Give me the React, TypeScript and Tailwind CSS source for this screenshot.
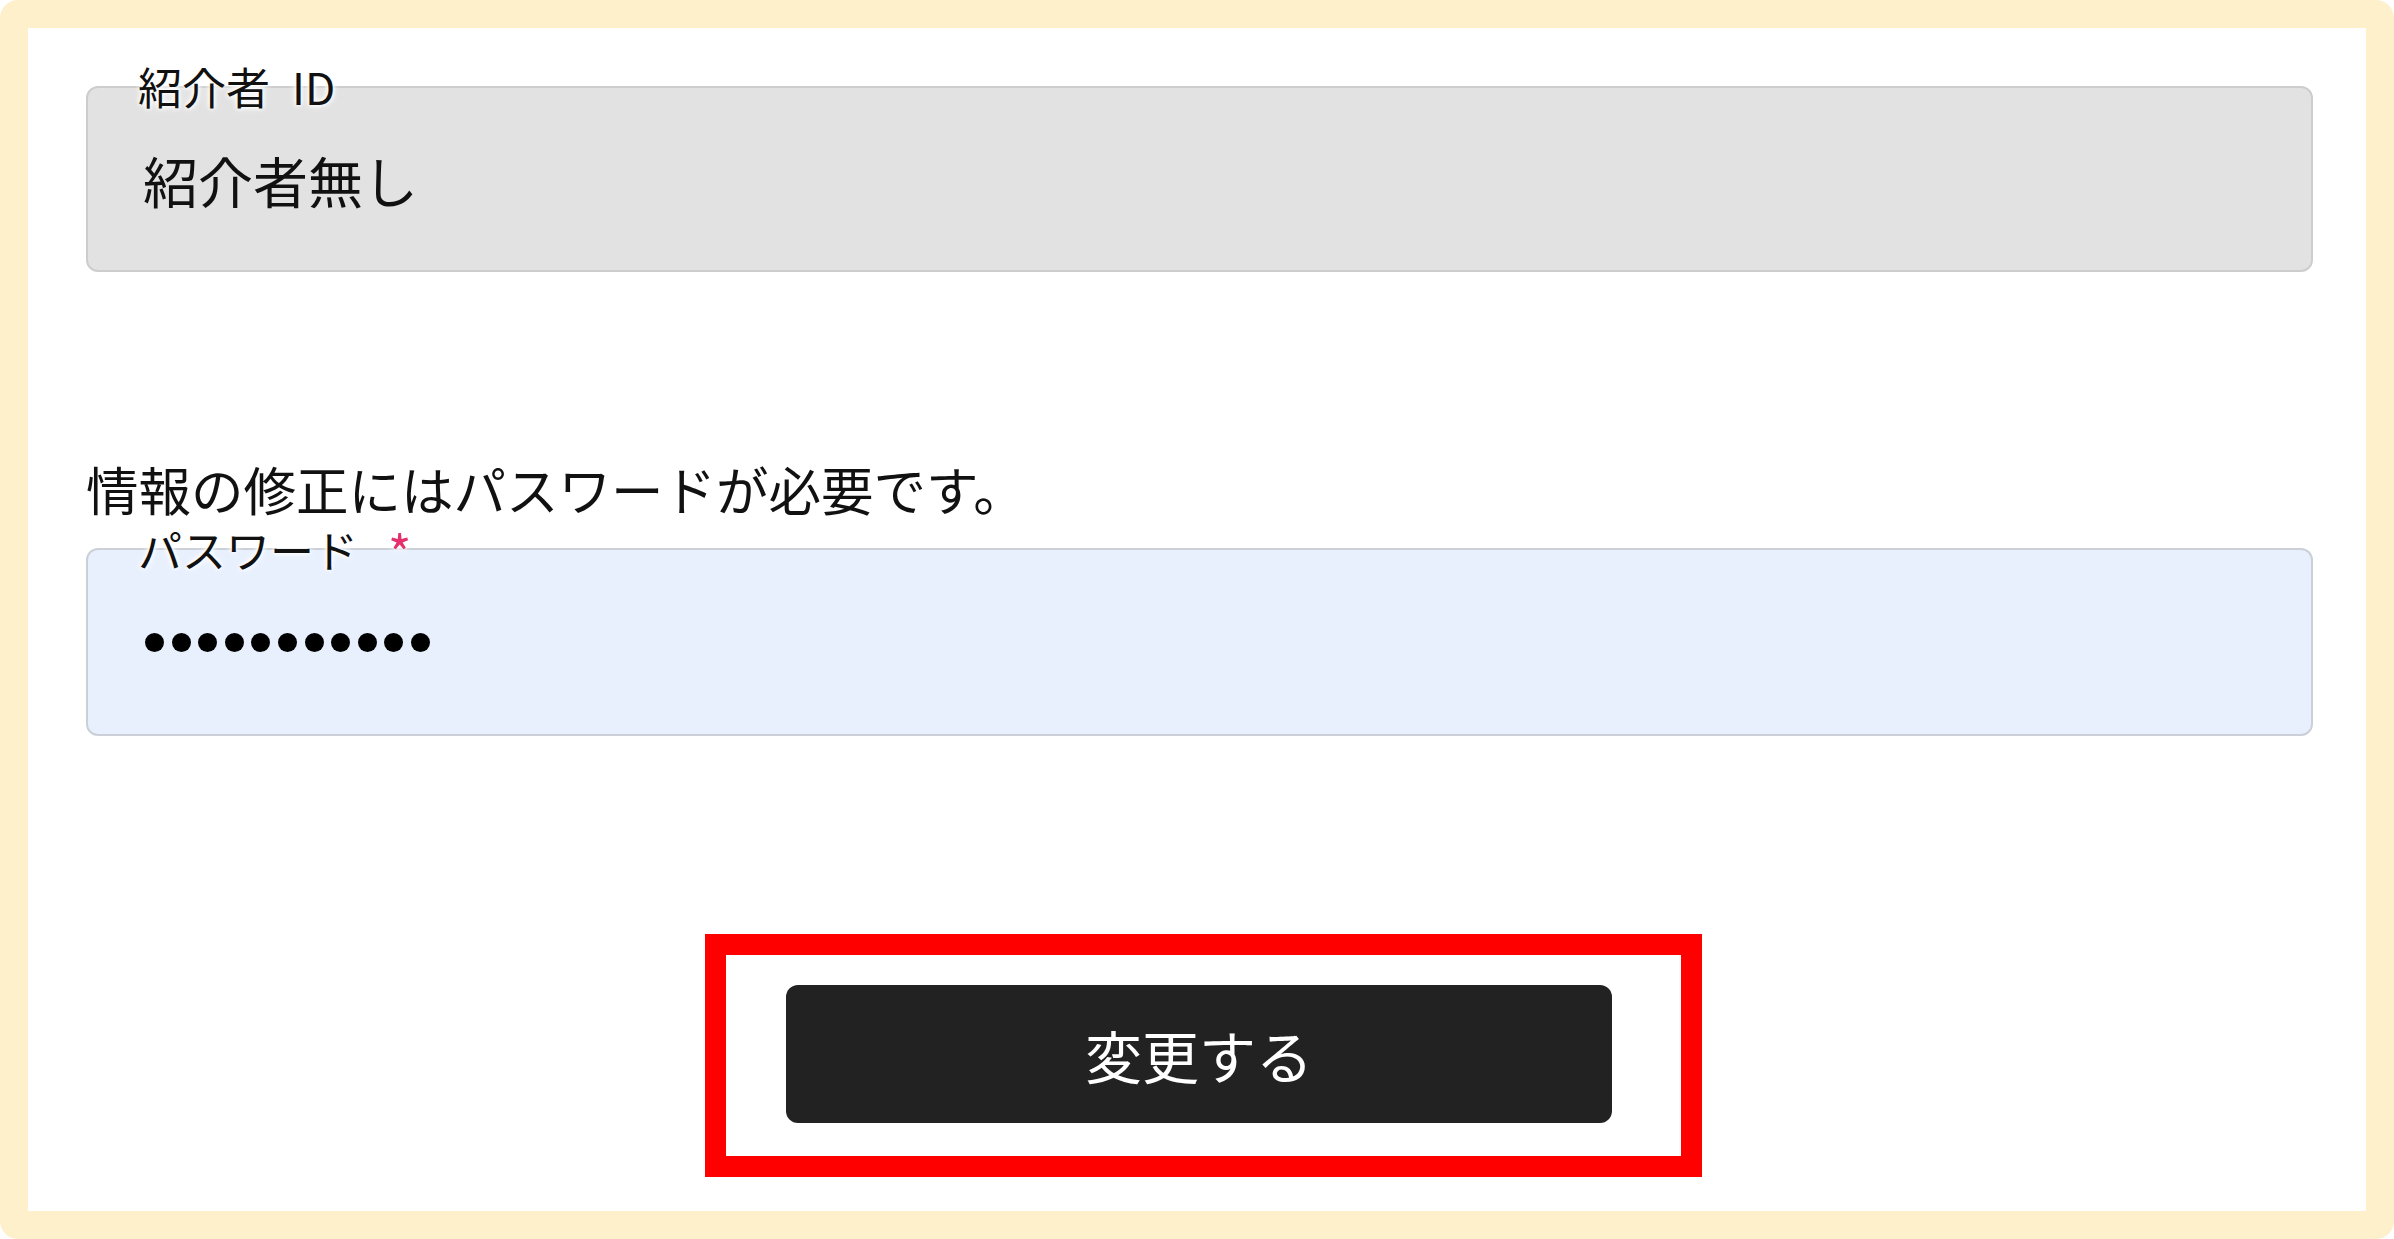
import React from 'react'

const font = { fontFamily: '"Noto Sans CJK JP", "Noto Sans", sans-serif' }

function FieldLabel({ children }: { children: React.ReactNode }) {
  return (
    <span className="absolute left-[50px] top-[-26px] flex items-center text-[44px] leading-[48px] text-[#111] [text-shadow:0_0_4px_#fff,0_0_5px_#fff,0_0_8px_#fff]">
      {children}
    </span>
  )
}

export default function App() {
  const dots = Array.from({ length: 11 })

  return (
    <div className="w-full h-[1239px] bg-white" style={font}>
      <div className="h-full rounded-[18px] bg-[#fff0cc] p-[28px]">
        <div className="h-full bg-white pl-[58px] pr-[53px] pt-[58px] flex flex-col">
          <div className="relative h-[186px] rounded-[12px] border-2 border-[#cdcdcd] bg-[#e2e2e2] flex items-center pl-[55px]">
            <FieldLabel>
              紹介者<span className="ml-[22px]">ID</span>
            </FieldLabel>
            <span className="text-[55px] leading-none text-[#111]">紹介者無し</span>
          </div>

          <p className="mt-[186px] text-[52.5px] leading-[60px] text-[#111]">
            情報の修正にはパスワードが必要です。
          </p>

          <div className="relative mt-[30px] h-[188px] rounded-[12px] border-2 border-[#cbd0d8] bg-[#e8f0fe] flex items-center pl-[57px]">
            <FieldLabel>
              パスワード
              <span className="ml-[30px] text-[50px] leading-none text-[#e4306b] translate-y-[2px]">*</span>
            </FieldLabel>
            <div className="flex items-center gap-[7.6px]">
              {dots.map((_, i) => (
                <span key={i} className="block w-[19px] h-[19px] rounded-full bg-black" />
              ))}
            </div>
          </div>

          <div className="mt-[198px] flex justify-center">
            <div className="ml-[8px] border-[21px] border-[#ff0000] pl-[60px] pr-[69px] pt-[30px] pb-[33px]">
              <button className="w-[826px] h-[138px] rounded-[12px] bg-[#222222] text-white text-[57px] leading-none flex items-center justify-center">
                変更する
              </button>
            </div>
          </div>
        </div>
      </div>
    </div>
  )
}
